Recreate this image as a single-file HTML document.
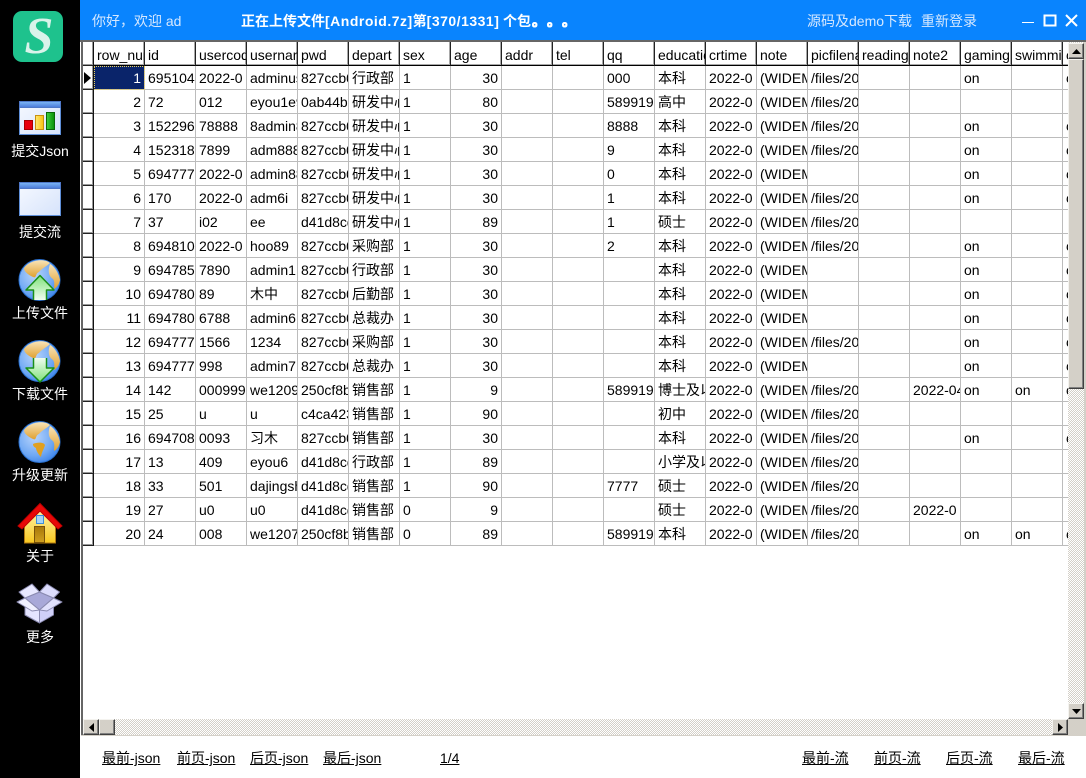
<!DOCTYPE html>
<html><head><meta charset="utf-8"><style>
html,body{margin:0;padding:0;width:1086px;height:778px;overflow:hidden;background:#fff;font-family:"Liberation Sans","Noto Sans CJK SC",sans-serif;font-size:14px;color:#000}
.a{position:absolute;white-space:nowrap}
#side{left:0;top:0;width:80px;height:778px;background:#000}
#top{left:80px;top:0;width:1006px;height:40px;background:#0984fe}
.lab{position:absolute;left:0;width:80px;text-align:center;color:#fff;line-height:18px}
.t{line-height:18px;color:#d6e8ff;top:12px}
.b{color:#fff;font-weight:bold}
.d{-webkit-text-stroke:1px #fff}
.lk{top:749px;line-height:18px;text-decoration:underline;color:#000}
#grid{left:81px;top:41px;width:987px;height:678px;overflow:hidden}
table{position:absolute;left:13px;top:0;border-collapse:separate;border-spacing:0;table-layout:fixed;width:1020px}
td,th{box-sizing:border-box;width:51px;height:24px;padding:2px 0 0 3px;overflow:hidden;white-space:nowrap;font-weight:normal;text-align:left;border-right:1px solid #bcbcbc;border-bottom:1px solid #bcbcbc;line-height:21px}
th{height:25px;padding-top:3px;line-height:20px;background:#fff;border-right:1px solid #222;border-bottom:1px solid #000;box-shadow:inset -1px -1px 0 #a8a8a8}
td.r{text-align:right;padding:2px 3px 0 0}
td.s{background:#0a246a;color:#fff;outline:1px dotted #e8d060;outline-offset:-1px}
.rh{position:absolute;left:0;width:13px;box-sizing:border-box;background:#fff;border-right:1px solid #111;border-bottom:1px solid #222;box-shadow:inset -1px -1px 0 #999}
.btn{position:absolute;box-sizing:border-box;background:#d4d0c8;border:1px solid;border-color:#f4f3ef #404040 #404040 #f4f3ef;box-shadow:inset -1px -1px 0 #808080}
.dith{position:absolute;background-color:#fff;background-image:conic-gradient(#d4d0c8 25%,#fff 0 50%,#d4d0c8 0 75%,#fff 0);background-size:2px 2px}
svg{position:absolute;overflow:visible}
</style></head><body>
<div class="a" id="side"></div>
<svg style="left:0;top:0" width="80" height="660" viewBox="0 0 80 660">
<defs>
<linearGradient id="win" x1="0" y1="0" x2="1" y2="1"><stop offset="0" stop-color="#f6f9ff"/><stop offset="1" stop-color="#d6e3fb"/></linearGradient>
<linearGradient id="bar" x1="0" y1="0" x2="0" y2="1"><stop offset="0" stop-color="#7db8f6"/><stop offset="1" stop-color="#4a78d8"/></linearGradient>
<radialGradient id="gl" cx=".38" cy=".38" r=".75"><stop offset="0" stop-color="#b8d4fb"/><stop offset=".6" stop-color="#6fa8f4"/><stop offset="1" stop-color="#2f7ae6"/></radialGradient>
<linearGradient id="ar" x1="0" y1="0" x2="0" y2="1"><stop offset="0" stop-color="#7fe27a"/><stop offset="1" stop-color="#f0fdf0"/></linearGradient>
<linearGradient id="ard" x1="0" y1="1" x2="0" y2="0"><stop offset="0" stop-color="#7fe27a"/><stop offset="1" stop-color="#f0fdf0"/></linearGradient>
<linearGradient id="wall" x1="0" y1="0" x2="0" y2="1"><stop offset="0" stop-color="#fff4a8"/><stop offset="1" stop-color="#f8c820"/></linearGradient>
<linearGradient id="land" x1="0" y1="0" x2="0" y2="1"><stop offset="0" stop-color="#f8e4b8"/><stop offset="1" stop-color="#e0a030"/></linearGradient>
<linearGradient id="ybar" x1="0" y1="0" x2="1" y2="0"><stop offset="0" stop-color="#ffe870"/><stop offset="1" stop-color="#f8c010"/></linearGradient>
<linearGradient id="gbar" x1="0" y1="0" x2="1" y2="0"><stop offset="0" stop-color="#40d040"/><stop offset="1" stop-color="#089008"/></linearGradient>
<linearGradient id="door" x1="0" y1="0" x2="0" y2="1"><stop offset="0" stop-color="#a87808"/><stop offset="1" stop-color="#d0a020"/></linearGradient>
<g id="globe"><circle cx="39.500" cy="0" r="20.500" fill="url(#gl)" stroke="#2c73d2" stroke-width="1"/>
<path d="M24 -12C30 -20 44 -22 50 -17C46 -13 42 -12 39 -8C35 -7 37 -1 33 -3C29 -5 24 -8 24 -12Z" fill="url(#land)"/>
<path d="M33 2C37 0 44 0 45 3C44 7 42 9 41 15C38 12 36 8 36 6C34 5 33 4 33 2Z" fill="#e0a020"/>
<path d="M50 -16C55 -13 59 -6 60 0C59 5 56 8 54 9C54 5 55 2 53 -1C50 -3 47 -7 50 -16Z" fill="url(#land)"/></g>
</defs>
<rect x="13" y="11" width="50" height="51" rx="9" fill="#1ec28d"/>
<text x="39" y="53" text-anchor="middle" font-family="Liberation Serif" font-weight="bold" font-style="italic" font-size="52" fill="#d9f3ea">S</text>
<g><rect x="19.500" y="101.500" width="41" height="33" fill="url(#win)" stroke="#5f8fd8"/><rect x="19.500" y="101.500" width="41" height="6" fill="url(#bar)" stroke="#4f78c8"/>
<rect x="24.500" y="120.500" width="8" height="9" fill="#e8000c" stroke="#a80000"/><rect x="35.500" y="115.500" width="8" height="14" fill="url(#ybar)" stroke="#c89010"/><rect x="46.500" y="112.500" width="8" height="17" fill="url(#gbar)" stroke="#086808"/></g>
<g><rect x="19.500" y="182.500" width="41" height="33" fill="url(#win)" stroke="#5f8fd8"/><rect x="19.500" y="182.500" width="41" height="6" fill="url(#bar)" stroke="#4f78c8"/></g>
<use href="#globe" y="280"/>
<path d="M33.500 300V290H26L40 275.500L54 290H46.500V300Z" fill="url(#ar)"/>
<path d="M33.500 300V290H26L40 275.500L54 290H46.500V300" fill="none" stroke="#189018" stroke-width="1.500" stroke-linejoin="round"/>
<use href="#globe" y="361"/>
<path d="M33.500 358V368H26L40 382L54 368H46.500V358Z" fill="url(#ard)"/>
<path d="M33.500 358V368H26L40 382L54 368H46.500V358" fill="none" stroke="#189018" stroke-width="1.500" stroke-linejoin="round"/>
<use href="#globe" y="442"/>
<path d="M24.500 525L40 510L55.500 525V543H24.500Z" fill="url(#wall)" stroke="#b07810"/>
<path d="M18 526L40 503.500L62 526L58 529L40 511L22 529Z" fill="#e80808" stroke="#c00000" stroke-width="1"/>
<rect x="36.500" y="515.500" width="7" height="8" fill="#a8d4f6" stroke="#3f8ed8"/>
<rect x="34.500" y="526.500" width="10" height="16" fill="url(#door)" stroke="#7a5208"/>
<g stroke="#8a8ab0" stroke-width="1" stroke-linejoin="round">
<path d="M25 598L39.500 592L53.500 598L39.500 610Z" fill="#a8a8d8"/>
<path d="M25 598V615L39.500 623V610Z" fill="#e4e4ff"/><path d="M53.500 598V615L39.500 623V610Z" fill="#d0d0f8"/>
<path d="M19 592L32 584L39.500 592L25 598Z" fill="#e8e8ff"/><path d="M47 584L59.500 592L53.500 598L39.500 592Z" fill="#dcdcfc"/>
<path d="M17 602L25 598L39.500 610L32 611Z" fill="#f0f0ff"/><path d="M62 602L53.500 598L39.500 610L47 611Z" fill="#e0e0fc"/>
</g>
</svg>
<div class="lab" style="top:142px">提交Json</div>
<div class="lab" style="top:223px">提交流</div>
<div class="lab" style="top:304px">上传文件</div>
<div class="lab" style="top:385px">下载文件</div>
<div class="lab" style="top:466px">升级更新</div>
<div class="lab" style="top:547px">关于</div>
<div class="lab" style="top:628px">更多</div>

<div class="a" id="top"></div>
<div class="a t" style="left:92px">你好，欢迎 ad</div>
<div class="a t b" style="left:241px">正在上传文件<span style="letter-spacing:.5px">[Android.7z]</span>第<span style="letter-spacing:.5px">[370/1331]</span></div>
<div class="a t b" style="left:503px">个包</div>
<div class="a t b d" style="left:532px">。</div>
<div class="a t b d" style="left:547px">。</div>
<div class="a t b d" style="left:562px">。</div>
<div class="a t" style="left:807px">源码及demo下载</div>
<div class="a t" style="left:921px">重新登录</div>
<svg style="left:1020px;top:12px" width="60" height="18" viewBox="0 0 60 18" fill="none" stroke="#fff">
<path d="M2 10.500H14" stroke-width="1"/><rect x="24.500" y="3.500" width="11" height="10" stroke-width="2"/><path d="M46 3L57 14M57 3L46 14" stroke-width="2"/></svg>

<div class="a" style="left:80px;top:40px;width:1006px;height:696px;background:#fff"></div>

<div class="a" id="grid">
<div class="rh" style="top:0;height:25px"></div>
<div class="rh" style="top:25px;height:24px"></div><div class="rh" style="top:49px;height:24px"></div><div class="rh" style="top:73px;height:24px"></div><div class="rh" style="top:97px;height:24px"></div><div class="rh" style="top:121px;height:24px"></div><div class="rh" style="top:145px;height:24px"></div><div class="rh" style="top:169px;height:24px"></div><div class="rh" style="top:193px;height:24px"></div><div class="rh" style="top:217px;height:24px"></div><div class="rh" style="top:241px;height:24px"></div><div class="rh" style="top:265px;height:24px"></div><div class="rh" style="top:289px;height:24px"></div><div class="rh" style="top:313px;height:24px"></div><div class="rh" style="top:337px;height:24px"></div><div class="rh" style="top:361px;height:24px"></div><div class="rh" style="top:385px;height:24px"></div><div class="rh" style="top:409px;height:24px"></div><div class="rh" style="top:433px;height:24px"></div><div class="rh" style="top:457px;height:24px"></div><div class="rh" style="top:481px;height:24px"></div>
<svg style="left:3px;top:31px" width="8" height="12"><path d="M0 0L7 6L0 12Z" fill="#000"/></svg>
<table>
<tr><th>row_number</th><th>id</th><th>usercode</th><th>username</th><th>pwd</th><th>depart</th><th>sex</th><th>age</th><th>addr</th><th>tel</th><th>qq</th><th>education</th><th>crtime</th><th>note</th><th>picfilename</th><th>reading</th><th>note2</th><th>gaming</th><th>swimming</th><th>c</th></tr>
<tr><td class="r s">1</td><td>695104</td><td>2022-0</td><td>adminuser</td><td>827ccb0e</td><td>行政部</td><td>1</td><td class="r">30</td><td></td><td></td><td>000</td><td>本科</td><td>2022-0</td><td>(WIDEMEMO)</td><td>/files/2022</td><td></td><td></td><td>on</td><td></td><td>c</td></tr>
<tr><td class="r">2</td><td>72</td><td>012</td><td>eyou1e9</td><td>0ab44b</td><td>研发中心</td><td>1</td><td class="r">80</td><td></td><td></td><td>589919</td><td>高中</td><td>2022-0</td><td>(WIDEMEMO)</td><td>/files/2022</td><td></td><td></td><td></td><td></td><td></td></tr>
<tr><td class="r">3</td><td>152296</td><td>78888</td><td>8admin8</td><td>827ccb0e</td><td>研发中心</td><td>1</td><td class="r">30</td><td></td><td></td><td>8888</td><td>本科</td><td>2022-0</td><td>(WIDEMEMO)</td><td>/files/2022</td><td></td><td></td><td>on</td><td></td><td>c</td></tr>
<tr><td class="r">4</td><td>152318</td><td>7899</td><td>adm8888</td><td>827ccb0e</td><td>研发中心</td><td>1</td><td class="r">30</td><td></td><td></td><td>9</td><td>本科</td><td>2022-0</td><td>(WIDEMEMO)</td><td>/files/2022</td><td></td><td></td><td>on</td><td></td><td>c</td></tr>
<tr><td class="r">5</td><td>694777</td><td>2022-0</td><td>admin88</td><td>827ccb0e</td><td>研发中心</td><td>1</td><td class="r">30</td><td></td><td></td><td>0</td><td>本科</td><td>2022-0</td><td>(WIDEMEMO)</td><td></td><td></td><td></td><td>on</td><td></td><td>c</td></tr>
<tr><td class="r">6</td><td>170</td><td>2022-0</td><td>adm6i</td><td>827ccb0e</td><td>研发中心</td><td>1</td><td class="r">30</td><td></td><td></td><td>1</td><td>本科</td><td>2022-0</td><td>(WIDEMEMO)</td><td>/files/2022</td><td></td><td></td><td>on</td><td></td><td>c</td></tr>
<tr><td class="r">7</td><td>37</td><td>i02</td><td>ee</td><td>d41d8cd9</td><td>研发中心</td><td>1</td><td class="r">89</td><td></td><td></td><td>1</td><td>硕士</td><td>2022-0</td><td>(WIDEMEMO)</td><td>/files/2022</td><td></td><td></td><td></td><td></td><td></td></tr>
<tr><td class="r">8</td><td>694810</td><td>2022-0</td><td>hoo89</td><td>827ccb0e</td><td>采购部</td><td>1</td><td class="r">30</td><td></td><td></td><td>2</td><td>本科</td><td>2022-0</td><td>(WIDEMEMO)</td><td>/files/2022</td><td></td><td></td><td>on</td><td></td><td>c</td></tr>
<tr><td class="r">9</td><td>694785</td><td>7890</td><td>admin1</td><td>827ccb0e</td><td>行政部</td><td>1</td><td class="r">30</td><td></td><td></td><td></td><td>本科</td><td>2022-0</td><td>(WIDEMEMO)</td><td></td><td></td><td></td><td>on</td><td></td><td>c</td></tr>
<tr><td class="r">10</td><td>694780</td><td>89</td><td>木中</td><td>827ccb0e</td><td>后勤部</td><td>1</td><td class="r">30</td><td></td><td></td><td></td><td>本科</td><td>2022-0</td><td>(WIDEMEMO)</td><td></td><td></td><td></td><td>on</td><td></td><td>c</td></tr>
<tr><td class="r">11</td><td>694780</td><td>6788</td><td>admin6</td><td>827ccb0e</td><td>总裁办</td><td>1</td><td class="r">30</td><td></td><td></td><td></td><td>本科</td><td>2022-0</td><td>(WIDEMEMO)</td><td></td><td></td><td></td><td>on</td><td></td><td>c</td></tr>
<tr><td class="r">12</td><td>694777</td><td>1566</td><td>1234</td><td>827ccb0e</td><td>采购部</td><td>1</td><td class="r">30</td><td></td><td></td><td></td><td>本科</td><td>2022-0</td><td>(WIDEMEMO)</td><td>/files/2022</td><td></td><td></td><td>on</td><td></td><td>c</td></tr>
<tr><td class="r">13</td><td>694777</td><td>998</td><td>admin7</td><td>827ccb0e</td><td>总裁办</td><td>1</td><td class="r">30</td><td></td><td></td><td></td><td>本科</td><td>2022-0</td><td>(WIDEMEMO)</td><td></td><td></td><td></td><td>on</td><td></td><td>c</td></tr>
<tr><td class="r">14</td><td>142</td><td>000999</td><td>we1209</td><td>250cf8b5</td><td>销售部</td><td>1</td><td class="r">9</td><td></td><td></td><td>589919</td><td>博士及以上</td><td>2022-0</td><td>(WIDEMEMO)</td><td>/files/2022</td><td></td><td>2022-04</td><td>on</td><td>on</td><td>c</td></tr>
<tr><td class="r">15</td><td>25</td><td>u</td><td>u</td><td>c4ca4238</td><td>销售部</td><td>1</td><td class="r">90</td><td></td><td></td><td></td><td>初中</td><td>2022-0</td><td>(WIDEMEMO)</td><td>/files/2022</td><td></td><td></td><td></td><td></td><td></td></tr>
<tr><td class="r">16</td><td>694708</td><td>0093</td><td>习木</td><td>827ccb0e</td><td>销售部</td><td>1</td><td class="r">30</td><td></td><td></td><td></td><td>本科</td><td>2022-0</td><td>(WIDEMEMO)</td><td>/files/2022</td><td></td><td></td><td>on</td><td></td><td>c</td></tr>
<tr><td class="r">17</td><td>13</td><td>409</td><td>eyou6</td><td>d41d8cd9</td><td>行政部</td><td>1</td><td class="r">89</td><td></td><td></td><td></td><td>小学及以下</td><td>2022-0</td><td>(WIDEMEMO)</td><td>/files/2022</td><td></td><td></td><td></td><td></td><td></td></tr>
<tr><td class="r">18</td><td>33</td><td>501</td><td>dajingshen</td><td>d41d8cd9</td><td>销售部</td><td>1</td><td class="r">90</td><td></td><td></td><td>7777</td><td>硕士</td><td>2022-0</td><td>(WIDEMEMO)</td><td>/files/2022</td><td></td><td></td><td></td><td></td><td></td></tr>
<tr><td class="r">19</td><td>27</td><td>u0</td><td>u0</td><td>d41d8cd9</td><td>销售部</td><td>0</td><td class="r">9</td><td></td><td></td><td></td><td>硕士</td><td>2022-0</td><td>(WIDEMEMO)</td><td>/files/2022</td><td></td><td>2022-0</td><td></td><td></td><td></td></tr>
<tr><td class="r">20</td><td>24</td><td>008</td><td>we1207</td><td>250cf8b5</td><td>销售部</td><td>0</td><td class="r">89</td><td></td><td></td><td>589919</td><td>本科</td><td>2022-0</td><td>(WIDEMEMO)</td><td>/files/2022</td><td></td><td></td><td>on</td><td>on</td><td>c</td></tr>
</table>
</div>
<div class="a" style="left:81px;top:40px;width:2px;height:696px;background:#666"></div>
<div class="a" style="left:80px;top:40px;width:1006px;height:2px;background:#666"></div>

<div class="dith" style="left:1068px;top:42px;width:16px;height:677px"></div>
<div class="btn" style="left:1068px;top:43px;width:16px;height:16px"><svg style="left:3px;top:5px" width="9" height="5"><path d="M4.500 0L9 5H0Z" fill="#000"/></svg></div>
<div class="btn" style="left:1068px;top:59px;width:16px;height:330px"></div>
<div class="btn" style="left:1068px;top:703px;width:16px;height:16px"><svg style="left:3px;top:5px" width="9" height="5"><path d="M0 0H9L4.500 5Z" fill="#000"/></svg></div>
<div class="dith" style="left:83px;top:719px;width:969px;height:16px"></div>
<div class="btn" style="left:83px;top:719px;width:16px;height:16px"><svg style="left:5px;top:3px" width="5" height="9"><path d="M5 0V9L0 4.500Z" fill="#000"/></svg></div>
<div class="btn" style="left:99px;top:719px;width:16px;height:16px"></div>
<div class="btn" style="left:1052px;top:719px;width:16px;height:16px"><svg style="left:5px;top:3px" width="5" height="9"><path d="M0 0L5 4.500L0 9Z" fill="#000"/></svg></div>
<div class="a" style="left:1068px;top:719px;width:18px;height:17px;background:#d4d0c8"></div>
<div class="a" style="left:1084px;top:42px;width:2px;height:677px;background:#d4d0c8"></div>
<div class="a" style="left:81px;top:735px;width:1005px;height:1px;background:#d4d0c8"></div>

<div class="a lk" style="left:102px">最前-json</div>
<div class="a lk" style="left:177px">前页-json</div>
<div class="a lk" style="left:250px">后页-json</div>
<div class="a lk" style="left:323px">最后-json</div>
<div class="a lk" style="left:440px">1/4</div>
<div class="a lk" style="left:802px">最前-流</div>
<div class="a lk" style="left:874px">前页-流</div>
<div class="a lk" style="left:946px">后页-流</div>
<div class="a lk" style="left:1018px">最后-流</div>
</body></html>
